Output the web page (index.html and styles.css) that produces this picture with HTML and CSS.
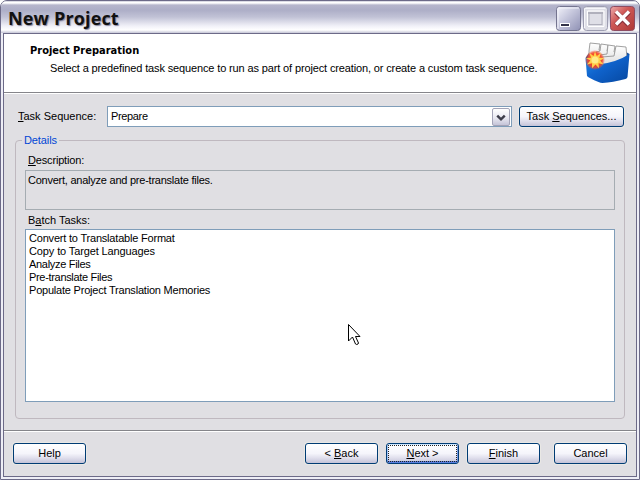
FILE: index.html
```html
<!DOCTYPE html>
<html lang="en">
<head>
<meta charset="utf-8">
<title>New Project</title>
<link rel="stylesheet" href="styles.css">
</head>
<body>
<div class="window">
  <header class="titlebar">
    <h1 class="title">New Project</h1>
    <div class="controls">
      <svg width="25" height="25" viewBox="0 0 25 25"><defs><linearGradient id="lilac" x2="1" y2="1"><stop stop-color="#f4f4fb"/><stop offset=".45" stop-color="#c5c6dc"/><stop offset="1" stop-color="#8f91b4"/></linearGradient></defs><rect x=".5" y=".5" width="24" height="24" rx="3" fill="url(#lilac)" stroke="#74748f"/><path d="M2 23V2h21" fill="none" stroke="#f3f3fa"/><path d="M4 17h10v4H4z" fill="#fff"/><path d="M5 18h8v2H5z" fill="#333349"/></svg>
      <svg width="25" height="25" viewBox="0 0 25 25"><rect x=".5" y=".5" width="24" height="24" rx="3" fill="#dfdfe7" stroke="#9d9db1"/><path d="M1.5 22V2.500h21" fill="none" stroke="#f6f6fa"/><rect x="6" y="6.500" width="13" height="12" fill="none" stroke="#b0b0bc"/><path d="M5 6h15v2H5z" fill="#b0b0bc"/><path d="M4.500 20V5h16.500v15.500H5" fill="none" stroke="#fff"/></svg>
      <svg width="25" height="25" viewBox="0 0 25 25"><defs><linearGradient id="red" x2="1" y2="1"><stop stop-color="#edabab"/><stop offset=".4" stop-color="#cf5957"/><stop offset="1" stop-color="#ad3836"/></linearGradient></defs><rect x=".5" y=".5" width="24" height="24" rx="3" fill="url(#red)" stroke="#8e4c62"/><path d="M6 6l13 13M19 6L6 19" stroke="#872f38" stroke-width="5"/><path d="M6 5.500l13 13M19 5.500l-13 13" stroke="#fff" stroke-width="3.500"/></svg>
    </div>
  </header>
  <main class="client">
    <section class="banner">
      <div>
        <h2 class="heading">Project Preparation</h2>
        <p class="summary"><span class="t-summary">Select a predefined task sequence to run as part of project creation, or create a custom task sequence.</span></p>
      </div>
      <svg class="project-icon" width="48" height="44" viewBox="0 0 48 44">
        <defs><linearGradient id="blue" x2="1" y2="1"><stop stop-color="#218cea"/><stop offset=".45" stop-color="#0f62cb"/><stop offset="1" stop-color="#06479f"/></linearGradient><linearGradient id="paper" x2="0" y2="1"><stop stop-color="#fff"/><stop offset="1" stop-color="#dcdcdc"/></linearGradient><radialGradient id="glow"><stop offset=".45" stop-color="#ff3c0b"/><stop offset=".75" stop-color="#f4482c" stop-opacity=".85"/><stop offset="1" stop-color="#f4552c" stop-opacity="0"/></radialGradient></defs>
        <path d="M2.500 16L6 11l37-1 3.500 2-7 10-20 3z" fill="#0b4b9f"/>
        <g fill="url(#paper)" stroke="#969696" stroke-width=".9"><path d="M6 20V9l1-8 10 1-1 6 5 1v12z"/><path d="M12 21l1-11 4-1 1-7 7 1-1 6 5 1v12z"/><path d="M16 22l1-9 7-1 1-9 7 1-1 6 5 1v9z"/><path d="M18 24l1-9 12-1 2-10 10 1 1 11-10 6z"/></g>
        <path d="M2.500 16q9 3 15.500 6 16-2 28.500-10l-2 23q-.3 1.500-2 2-13 3.500-23 4-2 0-4-1Q6 36 4 34z" fill="url(#blue)"/>
        <circle cx="12" cy="18" r="10" fill="url(#glow)"/>
        <path d="M12 9.500l1.800 4.500 4.200-3-1.700 4.700 5.200.3-4.300 2.500 3.300 4-5-1.300.5 5-3.500-3.700-3.500 3.700v-5l-5 1.300 3.300-4L3 16l5-.3L6.500 11l4 3z" fill="#ffcf4a"/><circle cx="12" cy="18" r="3.500" fill="#ffeb88"/>
      </svg>
    </section>
    <section class="page">
      <div class="task-row">
        <label class="task-label"><span><u>T</u>ask Sequence:</span></label>
        <div class="combo"><span class="t-prepare">Prepare</span><span class="drop"><svg width="17" height="17" viewBox="0 0 17 17"><path d="M4.500 6.500l4 4 4-4" fill="none" stroke="#3d3d4a" stroke-width="2.600"/></svg></span></div>
        <button class="button wide"><span>Task <u>S</u>equences...</span></button>
      </div>
      <fieldset class="details">
        <legend><span>Details</span></legend>
        <div class="field-label"><span class="t-desc"><u>D</u>escription:</span></div>
        <div class="description"><span class="t-convert">Convert, analyze and pre-translate files.</span></div>
        <div class="field-label batch"><span>B<u>a</u>tch Tasks:</span></div>
        <ul class="tasks">
          <li><span class="t-l1">Convert to Translatable Format</span></li>
          <li><span class="t-l2">Copy to Target Languages</span></li>
          <li><span class="t-l3">Analyze Files</span></li>
          <li><span class="t-l4">Pre-translate Files</span></li>
          <li><span class="t-l5">Populate Project Translation Memories</span></li>
        </ul>
      </fieldset>
    </section>
    <footer class="footer">
      <button class="button help"><span>Help</span></button>
      <button class="button"><span>&lt; <u>B</u>ack</span></button>
      <button class="button next"><span><u>N</u>ext &gt;</span></button>
      <button class="button"><span><u>F</u>inish</span></button>
      <button class="button cancel"><span>Cancel</span></button>
    </footer>
  </main>
</div>
<svg class="cursor" width="13" height="22" viewBox="0 0 13 22"><path d="M.5.5v16.500l4-4 3 7q1 1 2.500 0l.5-1-3-6.500H12z" fill="#fff" stroke="#000"/></svg>
</body>
</html>
```
FILE: styles.css
```css
* { box-sizing: border-box; }
body {
  margin: 0;
  width: 640px;
  height: 480px;
  overflow: hidden;
  background: #fff;
  color: #000;
  font: 11px/13px "Liberation Sans", Arial, sans-serif;
}
h1, h2, p, ul, fieldset { margin: 0; padding: 0; }
u { text-decoration: underline; text-underline-offset: 1px; text-decoration-thickness: 1px; text-decoration-skip-ink: none; }
span { white-space: nowrap; }
.window {
  height: 480px;
  padding: 0 2px 2px;
  border: 1px solid #6c6a88;
  border-radius: 7px 7px 0 0;
  background: #eeeef6;
}
.titlebar {
  display: flex;
  justify-content: space-between;
  height: 32px;
  margin: 0 -2px;
  padding: 5px 4px 0 7px;
  border-radius: 6px 6px 0 0;
  background: linear-gradient(#b9b9cb 0, #fff 1px, #fff 2px, #b6b6cc 4px, #adaec7 9px, #c1c2d6 16px, #f1f1f8 25px, #fff 29px, #c5c5d6 32px);
}
.title { font: bold 18px/24px "Open Sans", sans-serif; color: #111; text-shadow: 1px 1px 1px #8887a0; letter-spacing: .15px; }
.controls { display: flex; gap: 2px; }
.client {
  height: 444px;
  border: 1px solid #6c6a88;
  background: #e0dfe3;
}
.banner {
  display: flex;
  justify-content: space-between;
  height: 59px;
  padding: 7px 5px 0 26px;
  background: #fff;
  border-bottom: 1px solid #85858a;
}
.heading { font: bold 11px/14px "DejaVu Sans Condensed", "DejaVu Sans", sans-serif; margin-top: 3px; }
.summary { margin: 4px 0 0 20px; }
.project-icon { margin-top: 1px; }
.page { height: 337px; padding: 12px 11px 0; border-top: 1px solid #fff; }
.task-row { display: flex; height: 21px; align-items: center; }
.task-label { width: 92px; padding-left: 3px; }
.combo {
  display: flex;
  width: 405px;
  height: 21px;
  align-items: center;
  justify-content: space-between;
  padding: 0 1px 0 3px;
  border: 1px solid #7f9db9;
  background: #fff;
}
.drop { display: flex; width: 18px; height: 18px; border: 1px solid #a3a3b7; border-radius: 2px; background: linear-gradient(#fff, #e8e8f1 55%, #c5c4d8); }
.button {
  width: 73px;
  height: 21px;
  padding: 0;
  border: 1px solid #003c74;
  border-radius: 3px;
  background: linear-gradient(#fff, #f5f5fb 50%, #e1e0ed 72%, #c4c3d8);
  box-shadow: 0 0 0 1px #e9e8e5;
  color: #000;
  font: 11px/13px "Liberation Sans", Arial, sans-serif;
}
.wide { width: 105px; margin-left: 7px; }
.details {
  height: 285px;
  margin-top: 7px;
  padding: 0 9px;
  border: 1px solid #bfb8bf;
  border-radius: 4px;
}
legend { width: 37px; height: 13px; margin-left: -3px; padding: 0 2px; color: #0046d5; letter-spacing: -.1px; }
.field-label { padding: 7px 0 0 3px; height: 23px; }
.description { height: 40px; padding: 3px 2px; border: 1px solid #a5acb2; }
.batch { height: 19px; padding-top: 4px; }
.tasks { height: 173px; padding: 2px 3px; border: 1px solid #7f9db9; background: #fff; list-style: none; }
.t-summary { letter-spacing: -.135px; }
.t-prepare { letter-spacing: -.35px; }
.t-desc { letter-spacing: -.17px; }
.t-convert { letter-spacing: -.24px; }
.t-l1 { letter-spacing: -.2px; }
.t-l2 { letter-spacing: -.12px; }
.t-l3 { letter-spacing: -.3px; }
.t-l4 { letter-spacing: -.32px; }
.t-l5 { letter-spacing: -.21px; }
.footer {
  display: flex;
  height: 46px;
  gap: 8px;
  padding: 12px 9px 0;
  border-top: 1px solid #85858a;
  box-shadow: inset 0 1px #fff;
}
.help { margin-right: 211px; }
.cancel { margin-left: 6px; }
.next { position: relative; box-shadow: inset 0 1px #cee7ff, inset 0 -2px #5b7fe0, inset 1px 0 #a5c5f5, inset -1px 0 #7599e5; }
.next::after { content: ""; position: absolute; inset: 1px; border: 1px dotted #222; }
.cursor { position: absolute; left: 348px; top: 324px; }
```
